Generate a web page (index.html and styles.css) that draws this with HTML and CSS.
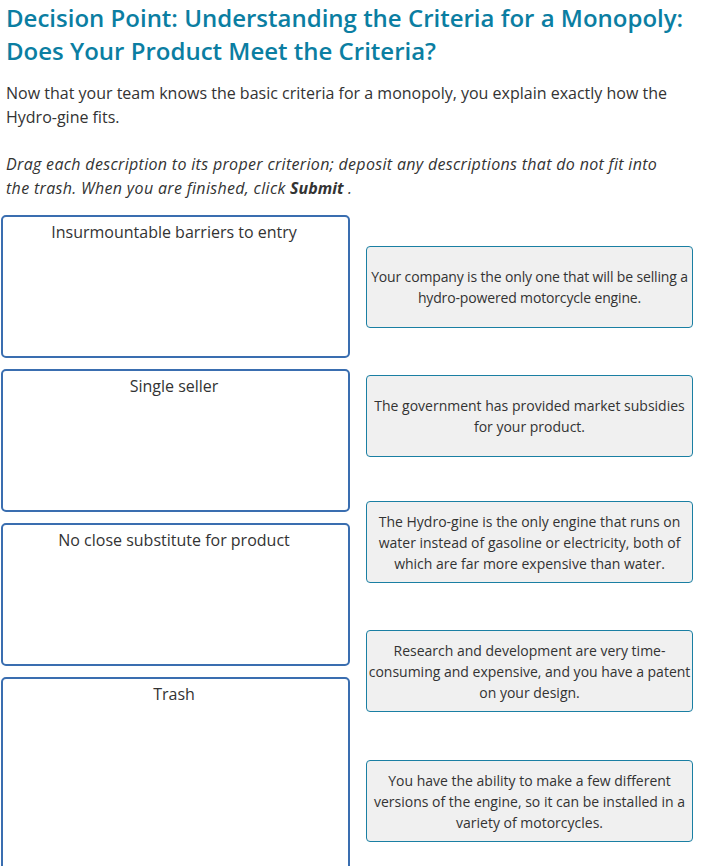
FILE: index.html
```html
<!DOCTYPE html>
<html lang="en">
<head>
<meta charset="utf-8">
<title>Decision Point</title>
<link rel="stylesheet" href="styles.css">
</head>
<body>
<div class="page">
  <h1 class="title">Decision Point: Understanding the Criteria for a Monopoly: Does Your Product Meet the Criteria?</h1>
  <p class="intro">Now that your team knows the basic criteria for a monopoly, you explain exactly how the Hydro-gine fits.</p>
  <p class="instr">Drag each description to its proper criterion; deposit any descriptions that do not fit into the trash. When you are finished, click <b>Submit</b> .</p>
  <div class="activity">
    <div class="targets">
      <div class="target">Insurmountable barriers to entry</div>
      <div class="target">Single seller</div>
      <div class="target">No close substitute for product</div>
      <div class="target trash">Trash</div>
    </div>
    <div class="cards">
      <div class="card tight">Your company is the only one that will be selling a hydro-powered motorcycle engine.</div>
      <div class="card">The government has provided market subsidies for your product.</div>
      <div class="card">The Hydro-gine is the only engine that runs on water instead of gasoline or electricity, both of which are far more expensive than water.</div>
      <div class="card">Research and development are very time-consuming and expensive, and you have a patent on your design.</div>
      <div class="card">You have the ability to make a few different versions of the engine, so it can be installed in a variety of motorcycles.</div>
    </div>
  </div>
</div>
</body>
</html>
```

FILE: styles.css
```css
html, body {
  margin: 0;
  padding: 0;
  background: #ffffff;
}
body {
  font-family: "Open Sans", "Noto Sans", sans-serif;
  color: #333333;
  overflow: hidden;
}
.page {
  padding: 1px 0 0 0;
}
.title {
  margin: 0 0 14px 0;
  padding: 0 6px;
  font-size: 24px;
  line-height: 33px;
  font-weight: 600;
  color: #0b7ea2;
}
.intro {
  margin: 0 0 23px 0;
  padding: 0 6px;
  font-size: 16px;
  line-height: 24px;
}
.instr {
  margin: 0 0 15px 0;
  padding: 0 30px 0 6px;
  font-size: 16px;
  line-height: 24px;
  font-style: italic;
  letter-spacing: 0.32px;
}
.instr b {
  font-weight: 700;
  letter-spacing: 0;
}
.activity {
  display: flex;
  align-items: flex-start;
  padding-left: 1px;
}
.targets {
  width: 349px;
  display: flex;
  flex-direction: column;
  gap: 11px;
}
.target {
  box-sizing: border-box;
  height: 143px;
  border: 2px solid #3a6eb0;
  border-radius: 5px;
  text-align: center;
  font-size: 16px;
  line-height: 24px;
  padding-top: 3px;
  padding-right: 3px;
  color: #333333;
}
.target.trash {
  height: 200px;
}
.cards {
  margin-left: 16px;
  margin-top: 31px;
  width: 327px;
  display: flex;
  flex-direction: column;
}
.card {
  box-sizing: border-box;
  height: 82px;
  border: 1px solid #1a7fa3;
  border-radius: 4px;
  background: #f0f0f0;
  display: flex;
  align-items: center;
  justify-content: center;
  text-align: center;
  font-size: 14px;
  line-height: 21px;
  color: #333333;
  padding: 0;
}
.card.tight {
  letter-spacing: -0.15px;
}
.card:nth-child(2) { margin-top: 47px; }
.card:nth-child(3) { margin-top: 44px; }
.card:nth-child(4) { margin-top: 47px; }
.card:nth-child(5) { margin-top: 48px; }
```
